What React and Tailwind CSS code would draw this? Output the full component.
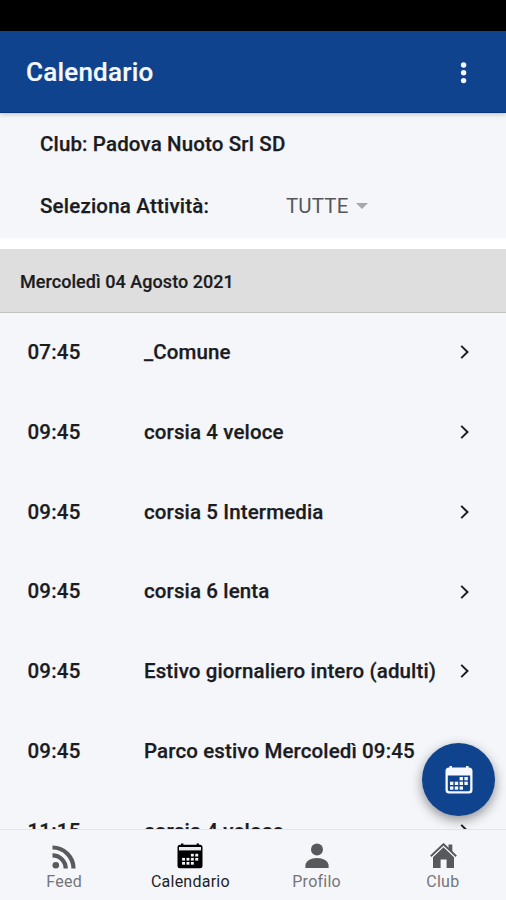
const rows = [
  ['07:45', '_Comune', true],
  ['09:45', 'corsia 4 veloce', true],
  ['09:45', 'corsia 5 Intermedia', true],
  ['09:45', 'corsia 6 lenta', true],
  ['09:45', 'Estivo giornaliero intero (adulti)', true],
  ['09:45', 'Parco estivo Mercoledì 09:45', false],
  ['11:15', 'corsia 4 veloce', true],
];

// Column and row of each marked day inside the calendar glyphs
const days = [[2, 0], [3, 0], [0, 1], [1, 1], [2, 1], [3, 1], [0, 2], [1, 2], [2, 2]];

function FeedIcon() {
  return (
    <svg className="h-6 w-6" viewBox="0 0 24 24" fill="none" stroke="#58595b" strokeWidth="4.2">
      <circle cx="3.8" cy="20.2" r="3.3" fill="#58595b" stroke="none" />
      <path d="M.5 10.3A13.2 13.2 0 0 1 13.7 23.5M.5 2.5A21 21 0 0 1 21.5 23.5" />
    </svg>
  );
}

function CalendarIcon() {
  return (
    <svg className="h-[26px] w-[26px]" viewBox="0 0 26 26">
      <path fill="#000" d="M3 1.8H4V.4H6.4V1.8H19.6V.4H22V1.8H23Q25.5 1.8 25.5 4.3V22.7Q25.5 25.2 23 25.2H3Q.5 25.2 .5 22.7V4.3Q.5 1.8 3 1.8Z" />
      <path fill="#e9eaee" d="M2 4H24V7.4H2Z" />
      {days.map(([c, r]) => (
        <rect key={`${c}-${r}`} x={5.1 + c * 4.4} y={10.8 + r * 4.1} width="2.9" height="2.7" fill="#f5f6fa" />
      ))}
    </svg>
  );
}

function ProfileIcon() {
  return (
    <svg className="h-[26px] w-6" viewBox="0 0 24 26" fill="#58595b">
      <circle cx="12" cy="6.5" r="6" />
      <path d="M.4 25V22.6C.4 18 6 15 12 15s11.6 3 11.6 7.6V25z" />
    </svg>
  );
}

function HomeIcon() {
  return (
    <svg className="ml-0.5 h-[26px] w-[27px]" viewBox="0 0 27 26">
      <path fill="#58595b" d="M18.5 1.5H22.3V9L18.5 5.5ZM13.5 4.2L24 14V25H16.6V16.5H10.6V25H3V14Z" />
      <path d="M.8 13.2L13.5 1.2L26.2 13.2" fill="none" stroke="#58595b" strokeWidth="2" />
      <path d="M1.8 14.6L13.5 3.5L25.2 14.6" fill="none" stroke="#f5f6fa" strokeWidth=".9" />
    </svg>
  );
}

const tabs = [
  ['Feed', FeedIcon],
  ['Calendario', CalendarIcon],
  ['Profilo', ProfileIcon],
  ['Club', HomeIcon],
];

export default function App() {
  return (
    <div className="relative flex h-[900px] w-[506px] flex-col overflow-hidden bg-[#f5f6fa] font-['Roboto','Liberation_Sans',sans-serif] font-medium text-[#1b1c1f]">
      <div className="h-[31px] shrink-0 bg-black" />
      <header className="z-10 flex h-[82px] shrink-0 items-center justify-between border-b border-[#083382] bg-[#10438d] pr-[38px] pl-[26px] shadow-[0_1px_5px_rgba(0,0,0,0.25)]">
        <h1 className="text-[26px] leading-[30px] font-medium tracking-[0.22px] text-[#f5f8ff] [-webkit-text-stroke:0.2px]">Calendario</h1>
        <svg className="mt-0.5 h-6 w-2" viewBox="0 0 8 24" fill="#f5f8ff">
          <circle cx="3.6" cy="4" r="2.7" />
          <circle cx="3.6" cy="11.8" r="2.7" />
          <circle cx="3.6" cy="19.6" r="2.7" />
        </svg>
      </header>
      <section className="h-[126px] shrink-0 border-b border-[#fafbfd] pl-10 text-[20.5px] leading-6 tracking-[0.14px]">
        <div className="flex h-[62px] items-center [-webkit-text-stroke:0.25px]">Club: Padova Nuoto Srl SD</div>
        <div className="flex h-[62px] items-center">
          <span className="w-[246px] tracking-[0.2px] [-webkit-text-stroke:0.25px]">Seleziona Attività:</span>
          <span className="font-normal text-[#555659]">TUTTE</span>
          <svg className="ml-[7px] h-1.5 w-3" viewBox="0 0 12 6"><path d="M0 0H12L6 6Z" fill="#a7a8ab" /></svg>
        </div>
      </section>
      <div className="h-[10px] shrink-0 bg-white" />
      <div className="flex h-[64px] shrink-0 items-center border-b border-[#c3c3c4] bg-[#dedede] pl-5 text-[18px] tracking-[0.05px]">
        <span className="mt-0.5 [-webkit-text-stroke:0.2px]">Mercoledì 04 Agosto 2021</span>
      </div>
      <main className="h-[516px] shrink-0 overflow-hidden text-[20.5px] tracking-[0.12px]">
        <div className="-mt-[0.6px]">
          {rows.map(([time, title, arrow], i) => (
            <div key={i} className="flex h-[79.8px] items-center pr-[36px] pl-[27.5px]">
              <span className="w-[116.5px] tracking-[0.2px] [-webkit-text-stroke:0.25px]">{time}</span>
              <span className="flex-1 whitespace-nowrap [-webkit-text-stroke:0.25px]">{title}</span>
              {arrow && (
                <svg className="h-[14px] w-[10px]" viewBox="0 0 10 14" fill="none" stroke="#1b1c1f" strokeWidth="2">
                  <path d="M1.2 .9L7.5 7L1.2 13.1" />
                </svg>
              )}
            </div>
          ))}
        </div>
      </main>
      <nav className="grid h-[71px] shrink-0 grid-cols-4 border-t border-[#e4e5e9] pl-px text-[16px] font-normal tracking-[0.25px] text-[#747578]">
        {tabs.map(([label, Icon]) => (
          <div key={label} className={label === 'Calendario' ? 'flex flex-col items-center pt-[13px] text-[#222326]' : 'flex flex-col items-center pt-[13px]'}>
            <div className="flex h-[26px] items-end">
              <Icon />
            </div>
            <span className="mt-[3px] leading-5">{label}</span>
          </div>
        ))}
      </nav>
      <button className="absolute top-[743px] left-[422px] flex h-[73px] w-[73px] items-center justify-center rounded-full bg-[#10438d] shadow-[0_4px_12px_rgba(0,0,0,0.42)]">
        <svg className="h-[30px] w-[28px]" viewBox="0 0 28 30">
          <path fillRule="evenodd" fill="#f5f8ff" d="M4 2.5H4.5V1H7V2.5H21V1H23.5V2.5H24Q27.5 2.5 27.5 6V25Q27.5 28.5 24 28.5H4Q.5 28.5 .5 25V6Q.5 2.5 4 2.5ZM2.8 10.6V24.5Q2.8 26.2 4.5 26.2H23.5Q25.2 26.2 25.2 24.5V10.6Z" />
          {days.map(([c, r]) => (
            <rect key={`${c}-${r}`} x={5 + c * 4.8} y={12 + r * 4.7} width="3.4" height="3.3" fill="#f5f8ff" />
          ))}
        </svg>
      </button>
    </div>
  );
}
